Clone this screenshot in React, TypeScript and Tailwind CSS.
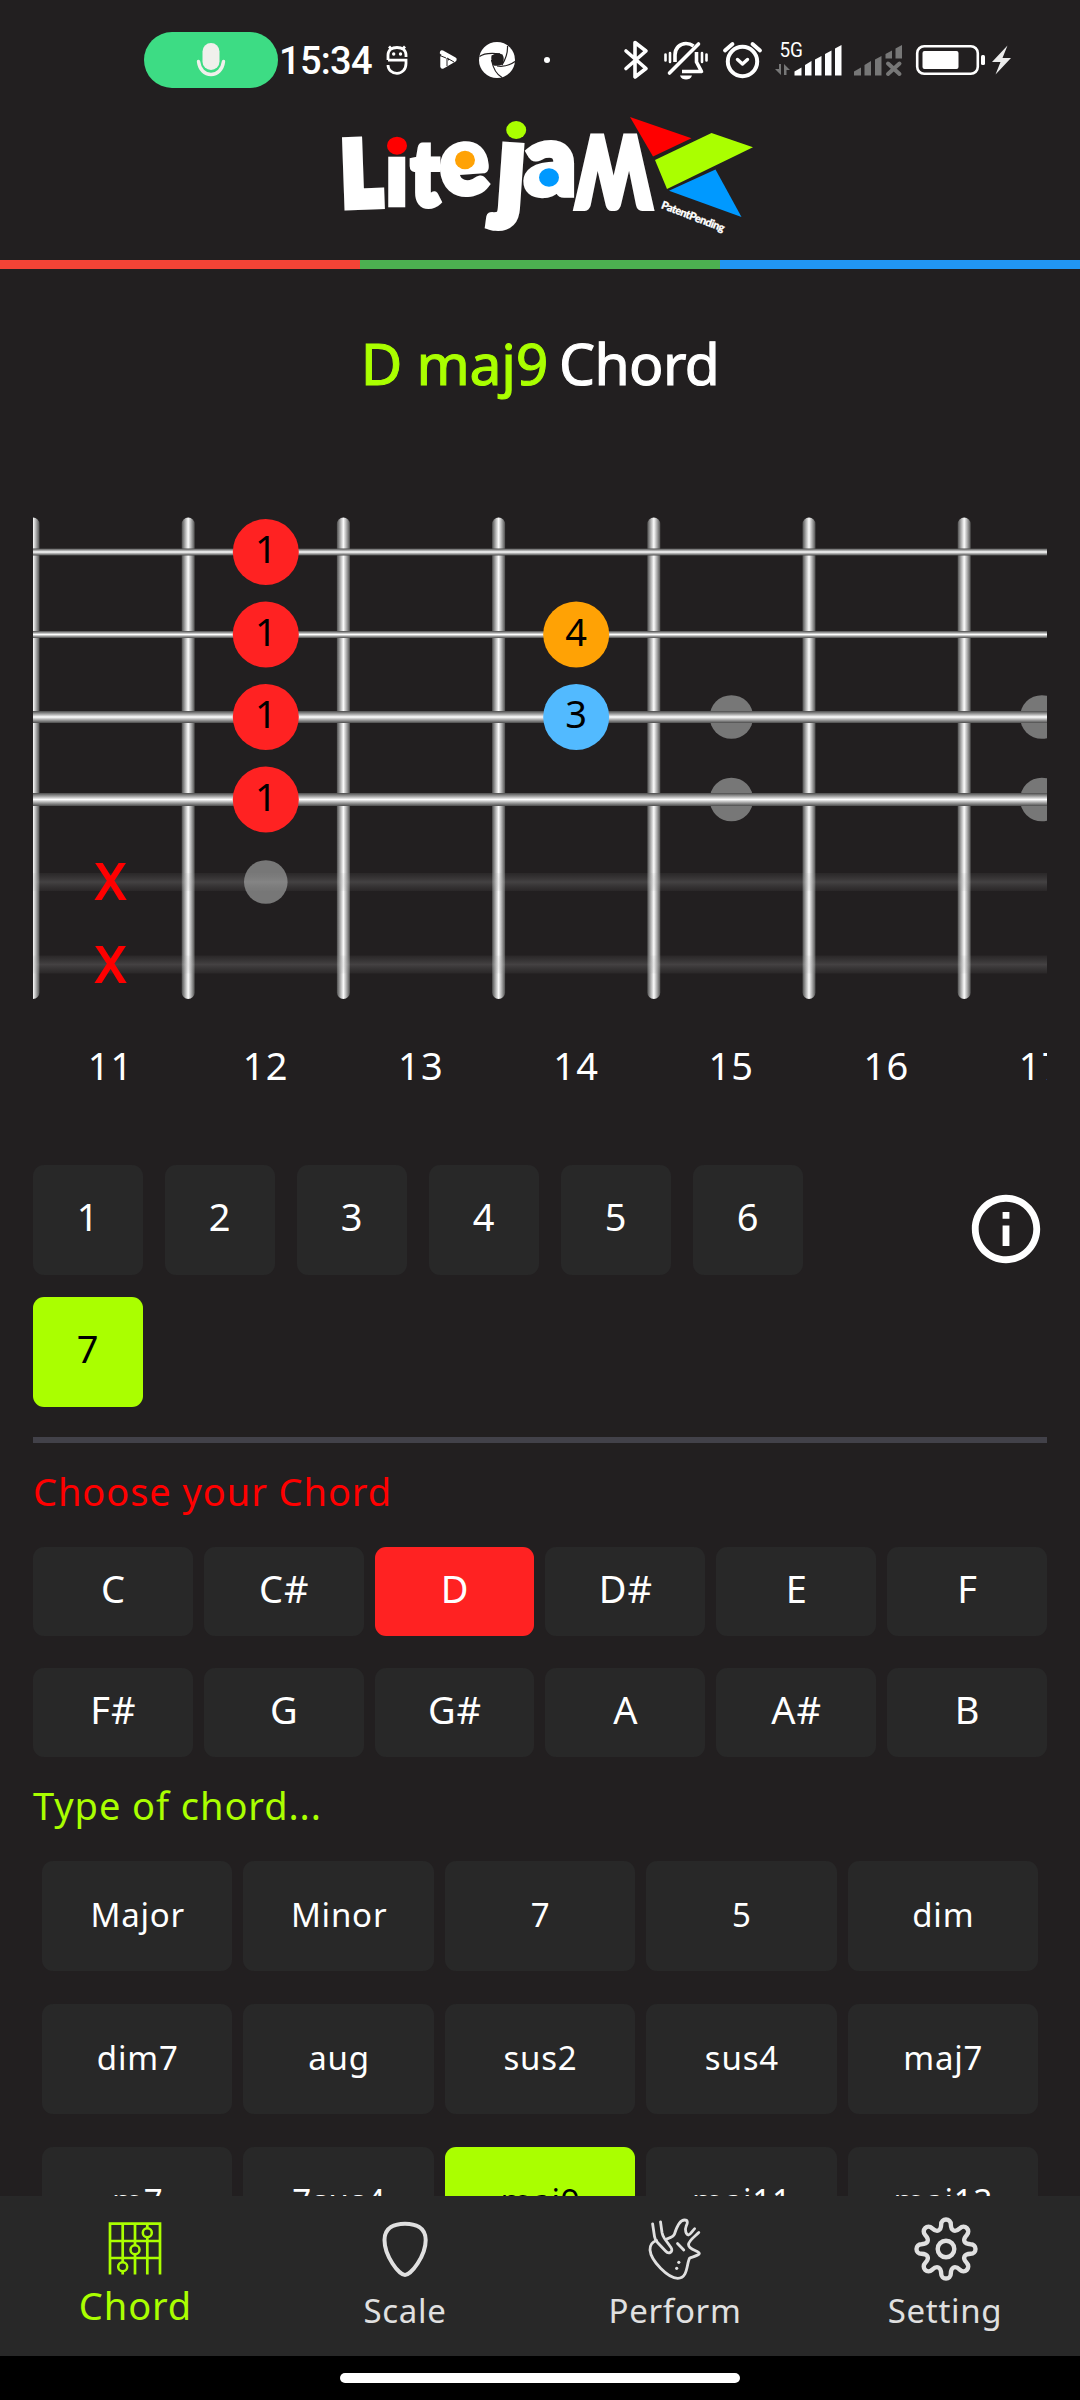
import { MdOutlineInfo } from "react-icons/md";
import type { ReactNode } from "react";

const LIME = "#aaff00";
const PITCH = 155.2;
const stringY = (n: number) => 35 + (n - 1) * 82.5;
const fretX = (n: number) => (n - 11) * PITCH + PITCH / 2;

function Icon({ box, className, children }: { box: string; className: string; children: ReactNode }) {
  return (
    <svg viewBox={box} className={`shrink-0 ${className}`} fill="none" stroke="none" aria-hidden="true">
      {children}
    </svg>
  );
}

function StatusBar() {
  return (
    <div className="flex h-[110px] shrink-0 items-center pt-[10px]">
      <div className="ml-[144px] flex h-14 w-[134px] shrink-0 items-center justify-center rounded-full bg-[#3ddc84]">
        <Icon box="194 32 34 56" className="h-14 w-[34px]">
          <rect x="202.5" y="43" width="17" height="27" rx="8.5" fill="#f0f0ec" />
          <path d="M198.5 61.5c1 8 6 13 12.500 13s11.500-5 12.500-13" stroke="#f0f0ec" strokeWidth="3.400" strokeLinecap="round" />
        </Icon>
      </div>
      <div className="w-[98px] shrink-0 pt-px pl-px font-[Roboto] text-[38px] leading-[56px] font-medium tracking-[-0.7px] text-white">15:34</div>
      <Icon box="384 32 26 56" className="ml-2 h-14 w-[26px]">
        <path d="M388 60v-5c0-5 4-7.500 9-7.500s9 2.500 9 7.500v2M388 60.200h18v3.300c0 6-4 9.800-9 9.800s-9-3.500-9-8.300M389 46.500l3 3M405 46.500l-3 3" stroke="#fff" strokeWidth="2.800" />
        <circle cx="393.700" cy="54" r="1.700" fill="#fff" />
        <circle cx="400.500" cy="54" r="1.700" fill="#fff" />
      </Icon>
      <Icon box="438 32 22 56" className="ml-7 h-14 w-[22px]">
        <path d="M442 52.500 454.500 59.500 442.500 66.500V57M446 64l-.3-6" stroke="#fff" strokeWidth="4.400" strokeLinejoin="round" strokeLinecap="round" />
        <path d="M440 55.500 446 58M454 62l-7-4v8" stroke="#221f20" strokeWidth="1" />
      </Icon>
      <Icon box="478 32 38 56" className="ml-[18px] h-14 w-[38px]">
        <circle cx="497" cy="60" r="18" fill="#fff" />
        <path d="M491.500 55.500Q497 52 502.500 54.500Q505 59 502.500 64.500Q498 66.500 493.500 65.500Q490.500 61 491.500 55.500z" fill="#221f20" />
        <path d="M479.500 56.500Q485 52 500 53.800M507.500 46Q508 55 502 65M515 61.500Q507 67.500 497 66M502 77.500Q494 73 491.500 60" stroke="#221f20" strokeWidth="1.200" />
      </Icon>
      <Icon box="542 32 10 56" className="ml-[26px] h-14 w-[10px]">
        <circle cx="547" cy="60" r="3" fill="#fff" />
      </Icon>
      <Icon box="622 32 28 56" className="ml-[70px] h-14 w-7">
        <path d="M626 51l20 17.500-11 8.500V42.500l11 8.500L626 68.500" stroke="#fff" strokeWidth="3.600" strokeLinejoin="round" strokeLinecap="round" />
      </Icon>
      <Icon box="662 32 48 56" className="ml-3 h-14 w-12">
        <path d="M675 62V55c0-7 5-11.500 11-11.500 3 0 5.500 1 7.500 2.500M696.500 52v10l5 9.500H682" stroke="#fff" strokeWidth="3.600" strokeLinejoin="round" />
        <path d="M698.500 44 669.500 73" stroke="#fff" strokeWidth="3.600" strokeLinecap="round" />
        <path d="M680 75.500h12c-1 3-3.500 4-6 4s-5-1-6-4z" fill="#fff" />
        <path d="M665.500 54.500v6M670 53v9M702 53v9M706.500 54.500v6" stroke="#fff" strokeWidth="2.600" strokeLinecap="round" />
      </Icon>
      <Icon box="721 32 43 56" className="ml-[11px] h-14 w-[43px]">
        <circle cx="742.500" cy="61.500" r="14.700" stroke="#fff" strokeWidth="4" />
        <path d="M725 50.500l7.500-6.500M760 50.500l-7.500-6.500" stroke="#fff" strokeWidth="3.800" strokeLinecap="round" />
        <path d="M737.500 59.500l5 4.500 5-4.500" stroke="#fff" strokeWidth="3.400" strokeLinecap="round" strokeLinejoin="round" />
      </Icon>
      <Icon box="774 32 70 56" className="ml-[10px] h-14 w-[70px]">
        <text x="779.500" y="57" fontFamily="Roboto" fontSize="20" fill="#fff" textLength="23.500" lengthAdjust="spacingAndGlyphs">5G</text>
        <path d="M781 64v11l-6-6h4v-5zM784 75V64l6 6h-3.500v5z" fill="#777" />
        <path d="M794.500 75.500v-4l7-4v8zM805 75.500V65l6.500-4v14.500zM815 75.500V59.500l6.500-3.500v19.500zM825 75.500V54l6.500-3.500v25zM835 75.500V48.500l6.500-3.500v30.500z" fill="#fff" />
      </Icon>
      <Icon box="852 32 52 56" className="ml-2 h-14 w-[52px]">
        <path d="M854 75.500v-4l7-4v8zM864.500 75.500V65l6.500-4v14.500zM875 75.500V59.500l6.500-3.500v19.500zM885.500 58.500V54l6.500-3.500v8zM895.500 58.500V48.500l6.500-3.500v13.500z" fill="#777" />
        <path d="M888 63.500l11.500 10.500M899.500 63.500 888 74" stroke="#777" strokeWidth="4" strokeLinecap="round" />
      </Icon>
      <Icon box="914 32 73 56" className="ml-[10px] h-14 w-[73px]">
        <rect x="917.200" y="46.200" width="60.600" height="27.600" rx="7" stroke="#fff" strokeWidth="2.600" />
        <rect x="922.500" y="51" width="36" height="18" rx="2" fill="#fff" />
        <rect x="981" y="55" width="4" height="10" rx="1.500" fill="#fff" />
      </Icon>
      <Icon box="990 32 23 56" className="ml-[3px] h-14 w-[23px]">
        <path d="M1007.500 45.500 992 62h8.500l-5 12.500L1011 58h-8.500z" fill="#ececec" />
      </Icon>
    </div>
  );
}

function Logo() {
  return (
    <svg viewBox="320 110 450 150" className="ml-[320px] h-[150px] w-[450px] shrink-0" role="img" aria-label="Litejam">
      <g fill="#fff" stroke="#fff" fontFamily="Lato, 'Open Sans', sans-serif" fontWeight="900" strokeLinejoin="miter">
        <text transform="translate(343.500 205) rotate(-2) scale(.84 1)" fontSize="86" strokeWidth="11">L</text>
        <text transform="translate(385 205)" fontSize="90" strokeWidth="4.500">ı</text>
        <text transform="translate(411.500 205) scale(.82 1)" fontSize="88" strokeWidth="7">t</text>
        <text transform="translate(442.500 194.500) rotate(-4) scale(.96 1)" fontSize="92" strokeWidth="7">e</text>
        <text transform="translate(494 206) rotate(4) scale(1.250 1.300)" fontSize="92" strokeWidth="5">ȷ</text>
        <text transform="translate(525 193.500) scale(1.070 1.040)" fontSize="92" strokeWidth="7">a</text>
        <text transform="translate(651.500 136.500) rotate(180) scale(.73 1)" fontSize="98" strokeWidth="7">W</text>
      </g>
      <ellipse cx="397" cy="145.700" rx="10" ry="9" fill="#f00" />
      <ellipse cx="465" cy="160" rx="10" ry="9.200" fill="#ffa205" />
      <ellipse cx="516.200" cy="130" rx="10" ry="9" fill={LIME} />
      <ellipse cx="549" cy="177.500" rx="10" ry="9.200" fill="#0099ff" />
      <path d="M630 117 691.500 138.300 653 156.500z" fill="#f00" />
      <path d="M655 160 711.500 133 753 147.300 667 189z" fill={LIME} />
      <path d="M669 190.700 715.500 169.500 741.500 217z" fill="#0099ff" />
      <text transform="translate(660.500 208) rotate(21)" fontFamily="Lato" fontWeight="900" fontSize="11" fill="#fff" stroke="#fff" strokeWidth=".3" textLength="67">PatentPending</text>
    </svg>
  );
}

function Fretboard() {
  const fingers = [
    { s: 1, f: 12, n: "1", c: "#ff2222" },
    { s: 2, f: 12, n: "1", c: "#ff2222" },
    { s: 3, f: 12, n: "1", c: "#ff2222" },
    { s: 4, f: 12, n: "1", c: "#ff2222" },
    { s: 2, f: 14, n: "4", c: "#ffa205" },
    { s: 3, f: 14, n: "3", c: "#52baff" },
  ];
  const strings = [7, 7, 12, 13];
  return (
    <div className="mx-[33px] mt-[104px] shrink-0 overflow-hidden">
      <svg viewBox="0 0 1014 482" className="h-[482px] w-[1014px]">
        <defs>
          <linearGradient id="fret">
            <stop offset="0" stopColor="#505050" />
            <stop offset=".25" stopColor="#a8a8a8" />
            <stop offset=".5" stopColor="#fcfcfc" />
            <stop offset=".75" stopColor="#a8a8a8" />
            <stop offset="1" stopColor="#505050" />
          </linearGradient>
          <linearGradient id="string" x2="0" y2="1">
            <stop offset="0" stopColor="#4c4c4c" />
            <stop offset=".25" stopColor="#a0a0a0" />
            <stop offset=".5" stopColor="#fff" />
            <stop offset=".75" stopColor="#a0a0a0" />
            <stop offset="1" stopColor="#4c4c4c" />
          </linearGradient>
          <linearGradient id="muted" x2="0" y2="1">
            <stop offset="0" stopColor="#8a8a8a" stopOpacity=".08" />
            <stop offset=".5" stopColor="#b0b0b0" stopOpacity=".24" />
            <stop offset="1" stopColor="#8a8a8a" stopOpacity=".08" />
          </linearGradient>
        </defs>
        {[0, 1, 2, 3, 4, 5, 6].map((i) => (
          <rect key={i} x={i * PITCH - 6.5} y="0.500" width="13" height="481.500" rx="6.500" fill="url(#fret)" />
        ))}
        {[[12, 5], [15, 3], [15, 4], [17, 3], [17, 4]].map(([f, s]) => (
          <circle key={`${f}-${s}`} cx={fretX(f)} cy={stringY(s)} r="21.800" fill="#777" />
        ))}
        {strings.map((h, i) => (
          <rect key={i} x="0" y={stringY(i + 1) - h / 2} width="1014" height={h} fill="url(#string)" />
        ))}
        <rect x="0" y={stringY(5) - 9} width="1014" height="18" fill="url(#muted)" />
        <rect x="0" y={stringY(6) - 9} width="1014" height="18" fill="url(#muted)" />
        <g fontFamily="Noto Sans" textAnchor="middle">
          {fingers.map(({ s, f, n, c }) => (
            <g key={`${s}-${f}`}>
              <circle cx={fretX(f)} cy={stringY(s)} r="33" fill={c} />
              <text x={fretX(f)} y={stringY(s) + 11} fontSize="38" fill="#000">{n}</text>
            </g>
          ))}
          {[5, 6].map((s) => (
            <text key={s} x={fretX(11)} y={stringY(s) + 17} fontSize="49" fill="#f00" stroke="#f00" strokeWidth="2.200">X</text>
          ))}
        </g>
      </svg>
      <div className="mt-[40px] flex h-[53px] text-[38px] leading-[52px] tracking-[1.2px] text-white">
        {[11, 12, 13, 14, 15, 16, 17].map((n) => (
          <div key={n} className="w-[155.2px] shrink-0 text-center">{n}</div>
        ))}
      </div>
    </div>
  );
}

function NoteRow({ notes }: { notes: string[] }) {
  return (
    <div className="grid h-[89px] shrink-0 grid-cols-6 gap-[11px]">
      {notes.map((n) => (
        <button key={n} className={`rounded-[11px] pb-[7px] pl-px text-[38px] leading-none tracking-[1px] text-white ${n === "D" ? "bg-[#ff2222]" : "bg-[#282828]"}`}>
          {n}
        </button>
      ))}
    </div>
  );
}

const TYPES = ["Major", "Minor", "7", "5", "dim", "dim7", "aug", "sus2", "sus4", "maj7", "m7", "7sus4", "maj9", "maj11", "maj13"];

function ChordIcon() {
  return (
    <Icon box="105 2215 60 68" className="h-[68px] w-[60px]">
      <path d="M110 2274.500V2223.700h50v50.800M122.700 2223.700v50.800M135 2223.700v50.800M147.300 2223.700v50.800M110 2241h50M110 2258h50" stroke={LIME} strokeWidth="2.700" />
      {[[147.3, 2232.7], [135, 2249.7], [122.7, 2266.7]].map(([x, y]) => (
        <circle key={x} cx={x} cy={y} r="4.500" fill="#282828" stroke={LIME} strokeWidth="2.500" />
      ))}
    </Icon>
  );
}

function PickIcon() {
  return (
    <Icon box="375 2215 60 68" className="h-[68px] w-[60px]">
      <path d="M405 2223.700C415 2223.700 425.700 2227 425.700 2240C425.700 2256 411 2275 405 2275S384.500 2256 384.500 2240C384.500 2227 395 2223.700 405 2223.700Z" stroke="#e0e0e0" strokeWidth="4" />
    </Icon>
  );
}

function HeartIcon() {
  return (
    <Icon box="645 2215 60 68" className="h-[68px] w-[60px]">
      <g stroke="#e0e0e0" strokeWidth="2.800" strokeLinecap="round" strokeLinejoin="round">
        <path d="M652.600 2223.800 654.500 2236.500Q655 2240 657.500 2242.500L665.500 2251C669 2255 673.800 2251.500 671 2247.500L664.500 2238.500Q662.500 2235.500 662 2232.500L660.500 2221.800" />
        <path d="M656.500 2240.500C652 2242 649.800 2245 650 2250C651 2261 668 2278.300 677.700 2278.300C688.500 2278.300 686.500 2262 689.800 2258C692 2257 698 2256 699.300 2253.500C699 2250.500 688.500 2250 688.500 2244.500C688.500 2241 694 2237 698.800 2232.500" />
        <path d="M666.500 2239C671 2237.500 673.500 2237 674.500 2234C677 2226 680.500 2220 684.500 2220C688.500 2220 687.500 2223.500 686.200 2226C684.500 2230 686 2234.500 688.500 2235C690.500 2234.500 692.500 2230.500 694.600 2228.700" />
        <path d="M677.500 2243.500l6.300 6.500" />
      </g>
      <circle cx="678.800" cy="2262.300" r="1.600" fill="#e0e0e0" />
      <circle cx="676.700" cy="2268.300" r="1.600" fill="#e0e0e0" />
    </Icon>
  );
}

// Eight rounded teeth: each one is a half circle joined to the next by a curved valley.
function gearPath() {
  const at = (k: number, u: number, v: number) => {
    const a = (k * Math.PI) / 4;
    const x = u * Math.cos(a) + v * Math.sin(a);
    const y = u * Math.sin(a) - v * Math.cos(a);
    return `${x.toFixed(2)} ${y.toFixed(2)}`;
  };
  let d = `M${at(0, -4.8, 24.7)}`;
  for (let k = 0; k < 8; k++) {
    d += `A4.8 4.8 0 0 1 ${at(k, 4.8, 24.7)}C${at(k, 5, 17.8)} ${at(k + 1, -5, 17.8)} ${at(k + 1, -4.8, 24.7)}`;
  }
  return d + "Z";
}

function GearIcon() {
  return (
    <Icon box="-35 -34 68 68" className="h-[68px] w-[68px]">
      <path d={gearPath()} stroke="#e0e0e0" strokeWidth="4.400" />
      <circle r="8.300" stroke="#e0e0e0" strokeWidth="4.400" />
    </Icon>
  );
}

function NavBar() {
  const items = [
    { label: "Scale", icon: <PickIcon /> },
    { label: "Perform", icon: <HeartIcon /> },
    { label: "Setting", icon: <GearIcon /> },
  ];
  return (
    <nav className="grid h-[160px] shrink-0 grid-cols-4 bg-[#282828] pt-[19px]">
      <div className="flex flex-col items-center">
        <ChordIcon />
        <span className="mt-[-4px] pl-px text-[38px] leading-[52px] tracking-[0.9px] text-[#aaff00]">Chord</span>
      </div>
      {items.map(({ label, icon }) => (
        <div key={label} className="flex flex-col items-center">
          {icon}
          <span className="mt-[5px] text-[33px] leading-[46px] tracking-[0.7px] text-[#e0e0e0]">{label}</span>
        </div>
      ))}
    </nav>
  );
}

export default function App() {
  return (
    <div className="flex h-[2400px] w-[1080px] flex-col overflow-hidden bg-[#221f20] font-['Noto_Sans',sans-serif]">
      <StatusBar />
      <Logo />
      <div className="grid h-[9px] shrink-0 grid-cols-3">
        <div className="bg-[#f44336]" />
        <div className="bg-[#4caf50]" />
        <div className="bg-[#2196f3]" />
      </div>
      <main className="flex min-h-0 flex-1 flex-col overflow-hidden">
        <h1 className="mt-[44px] flex h-[100px] shrink-0 items-center justify-center text-[57px] leading-none font-normal text-white [-webkit-text-stroke:1.1px]">
          <span className="mr-[11px] tracking-[-0.3px] text-[#aaff00]">D maj9</span>
          <span className="tracking-[-0.6px]">Chord</span>
        </h1>
        <Fretboard />
        <div className="mx-[33px] mt-[73px] flex h-[242px] shrink-0 justify-between">
          <div className="flex w-[780px] flex-wrap content-start gap-[22px]">
            {[1, 2, 3, 4, 5, 6, 7].map((n) => (
              <button key={n} className={`size-[110px] rounded-[11px] pr-px pb-[8px] text-[38px] leading-none ${n === 7 ? "bg-[#aaff00] text-black" : "bg-[#282828] text-white"}`}>
                {n}
              </button>
            ))}
          </div>
          <MdOutlineInfo className="mt-[23px] size-[82px] text-white" />
        </div>
        <div className="mx-[33px] mt-[30px] h-[6px] shrink-0 bg-[#424149]" />
        <section className="mx-[33px] flex shrink-0 flex-col">
          <h2 className="mt-[22px] h-[52px] text-[38px] leading-[52px] tracking-[0.93px] text-[#ff0000]">Choose your Chord</h2>
          <div className="mt-[30px] flex flex-col gap-8">
            <NoteRow notes={["C", "C#", "D", "D#", "E", "F"]} />
            <NoteRow notes={["F#", "G", "G#", "A", "A#", "B"]} />
          </div>
          <h2 className="mt-[22px] h-[52px] text-[38px] leading-[52px] tracking-[0.93px] text-[#aaff00]">Type of chord...</h2>
        </section>
        <div className="mx-[42px] mt-[30px] grid shrink-0 auto-rows-[110px] grid-cols-5 gap-x-[11px] gap-y-[33px]">
          {TYPES.map((t) => (
            <button key={t} className={`rounded-[11px] pb-[4px] pl-px text-[33px] leading-none tracking-[0.8px] ${t === "maj9" ? "bg-[#aaff00] text-black" : "bg-[#282828] text-white"}`}>
              {t}
            </button>
          ))}
        </div>
      </main>
      <NavBar />
      <div className="flex h-11 shrink-0 justify-center bg-black pt-[17px]">
        <div className="h-[10px] w-[400px] rounded-full bg-white" />
      </div>
    </div>
  );
}
